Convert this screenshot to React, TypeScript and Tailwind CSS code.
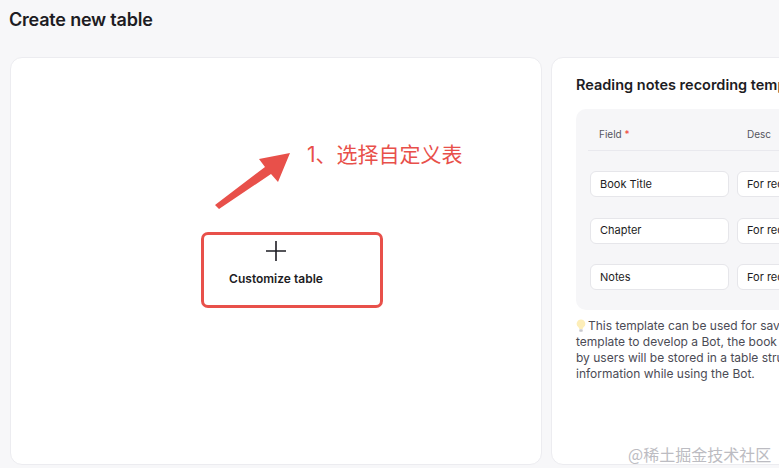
import React from "react";

const rows = ["Book Title", "Chapter", "Notes"];

function FieldRow({ name }: { name: string }) {
  return (
    <div className="flex gap-[8px] h-[26px]">
      <div className="w-[139px] shrink-0 bg-white border border-[#e6e6ea] rounded-[6px] px-[9px] flex items-center text-[11px] text-[#1d1c23]">
        {name}
      </div>
      <div className="w-[120px] shrink-0 bg-white border border-[#e6e6ea] rounded-[6px] px-[9px] flex items-center text-[11px] text-[#1d1c23] whitespace-nowrap">
        For recording the {name.toLowerCase()}
      </div>
    </div>
  );
}

function Bulb() {
  return (
    <svg width="10" height="14" viewBox="0 0 9 13" className="inline-block mr-[2px] -mt-[2px] align-middle">
      <path d="M4.5 0.5a4 4 0 0 0-2.4 7.2c.5.4.8 1 .8 1.6h3.2c0-.6.3-1.2.8-1.6A4 4 0 0 0 4.5.5z" fill="#fdeeb8" />
      <rect x="2.9" y="9.6" width="3.2" height="2.2" rx="0.6" fill="#c9c9cf" />
    </svg>
  );
}

export default function App() {
  return (
    <div
      className="relative w-[779px] h-[468px] overflow-hidden bg-[#f7f7f9]"
      style={{ fontFamily: "Inter, 'Noto Sans', 'Noto Sans CJK SC', sans-serif" }}
    >
      <div className="h-[57px] px-[9px] pt-[8px]">
        <h1 className="text-[18px] leading-[24px] font-semibold text-[#1d1c23] tracking-[-0.2px]">Create new table</h1>
      </div>
      <div className="flex gap-[9px] pl-[10px] h-[408px]">
        <div className="w-[532px] shrink-0 bg-white rounded-[12px] border border-[#ececf0] flex items-start justify-start pt-[174px] pl-[190px]">
          <div className="w-[182px] h-[76px] border-[3px] border-[#e8504a] rounded-[7px] flex flex-col items-center pt-[5px] pr-[32px]">
            <svg width="22" height="22" viewBox="0 0 22 22">
              <path d="M11 1v20M1 11h20" stroke="#1d1c23" strokeWidth="1.6" />
            </svg>
            <div className="mt-[8px] text-[12px] font-semibold text-[#1d1c23] whitespace-nowrap">Customize table</div>
          </div>
        </div>
        <div className="w-[400px] shrink-0 bg-white rounded-[12px] border border-[#ececf0] pl-[24px] pt-[17px]">
          <div className="text-[14.5px] leading-[20px] font-semibold text-[#1d1c23] whitespace-nowrap">
            Reading notes recording template
          </div>
          <div className="mt-[14px] w-[320px] h-[201px] bg-[#f6f6f8] rounded-[10px] pl-[14px] pt-[13px]">
            <div className="flex h-[29px] pb-[4px] items-center text-[10px] text-[#55555e] border-b border-[#e9e9ee] -ml-[2px] pl-[11px]">
              <div className="w-[148px]">
                Field <span className="text-[#f04438]">*</span>
              </div>
              <div>Desc</div>
            </div>
            <div className="flex flex-col gap-[20.5px] mt-[20px]">
              {rows.map((r) => (
                <FieldRow key={r} name={r} />
              ))}
            </div>
          </div>
          <div className="mt-[8px] text-[12px] leading-[16px] text-[#4b4b55] whitespace-nowrap">
            <div>
              <Bulb />
              This template can be used for saving reading notes. If you use this
            </div>
            <div>template to develop a Bot, the book name, chapter and notes entered</div>
            <div>by users will be stored in a table structure, so you can query the</div>
            <div>information while using the Bot.</div>
          </div>
        </div>
      </div>

      {/* annotation overlay */}
      <svg className="absolute left-0 top-0 pointer-events-none" width="779" height="468">
        <polygon
          points="215,205 265,167 259,159 290,153 278,182 271,174 219,209"
          fill="#e8504a"
        />
      </svg>
      <div
        className="absolute left-[307px] top-[141px] text-[21px] leading-[27px] text-[#e8504a] whitespace-nowrap"
        style={{ fontFamily: "Inter, 'Noto Sans CJK SC', sans-serif" }}
      >
        1、选择自定义表
      </div>
      <div
        className="absolute left-[628px] top-[443px] text-[16px] leading-[22px] text-[#bcbcc2] whitespace-nowrap"
        style={{ fontFamily: "'Noto Sans CJK SC', sans-serif" }}
      >
        @稀土掘金技术社区
      </div>
    </div>
  );
}
